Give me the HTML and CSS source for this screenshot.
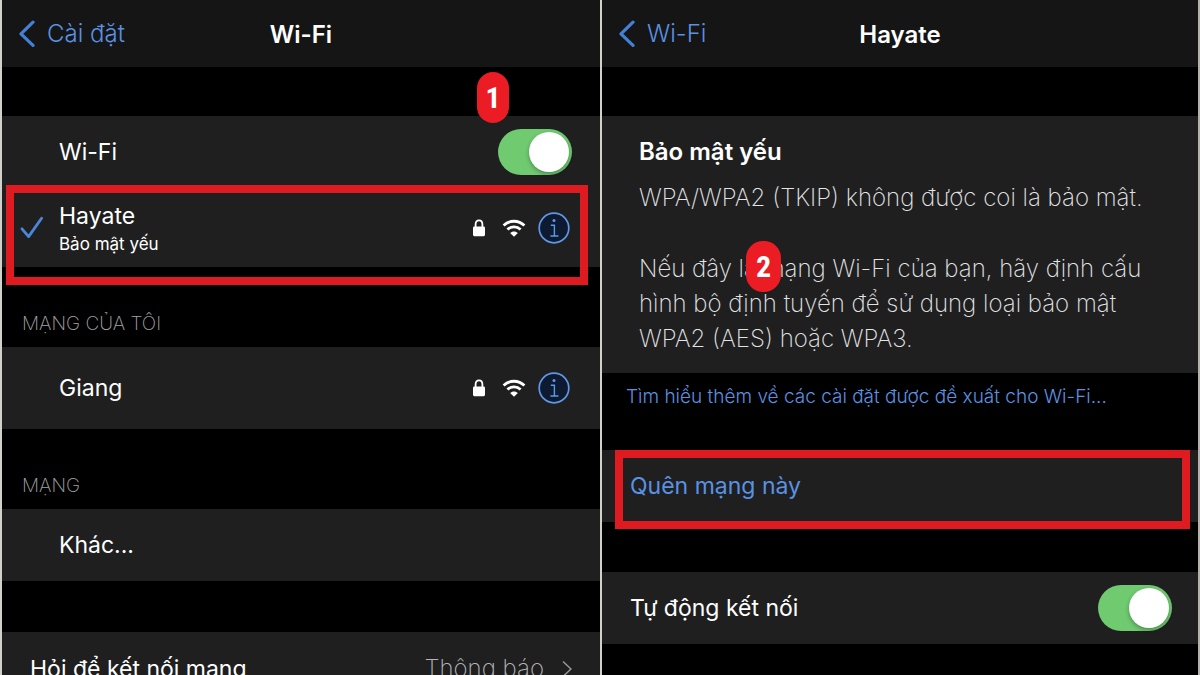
FILE: index.html
```
<!DOCTYPE html>
<html lang="vi">
<head>
    <meta charset="UTF-8">
    <meta name="viewport" content="width=device-width, initial-scale=1.0">
    <title>Wi-Fi</title>
    <link rel="stylesheet" href="styles.css">
</head>
<body>
    <!-- Shared icons -->
    <svg class="sprite" aria-hidden="true">
        <symbol id="back" viewBox="0 0 18 28">
            <path d="M15 2.2 3 13.8 15 25.4" fill="none" stroke="currentColor" stroke-width="3.2" stroke-linecap="round" stroke-linejoin="round"/>
        </symbol>
        <symbol id="lock" viewBox="0 0 14 18">
            <path d="M3.6 8V5.2C3.6 2.6 5 1.3 7 1.3s3.4 1.3 3.4 3.9V8" fill="none" stroke="currentColor" stroke-width="1.8"/>
            <rect x="1" y="7.4" width="12" height="9.8" rx="1.4" fill="currentColor"/>
        </symbol>
        <symbol id="wifi" viewBox="0 0 24 18">
            <path d="M1.6 6.6C7.4.8 16.6.8 22.4 6.6" fill="none" stroke="currentColor" stroke-width="2.8"/>
            <path d="M5.4 10.6c3.8-3.6 9.4-3.6 13.2 0" fill="none" stroke="currentColor" stroke-width="2.8"/>
            <path d="M12 17.8 8.1 14c2.2-2.1 5.6-2.1 7.8 0z" fill="currentColor"/>
        </symbol>
        <symbol id="info" viewBox="0 0 32 32">
            <circle cx="16" cy="16" r="14.8" fill="#0d1a30" stroke="currentColor" stroke-width="1.7"/>
            <circle cx="16" cy="8.6" r="1.5" fill="currentColor"/>
            <path d="M12.8 13.2h3.6v10.6M12.4 24h8" fill="none" stroke="currentColor" stroke-width="1.4"/>
        </symbol>
    </svg>

    <main class="screens">
        <section class="screen">
            <header class="navbar">
                <a href="#" class="back-link">
                    <svg class="icon-back"><use href="#back"/></svg>
                    <span>Cài đặt</span>
                </a>
                <h1 class="title">Wi-Fi</h1>
            </header>

            <div class="row row-first">
                <label for="wifi-toggle" class="name">Wi-Fi</label>
                <input type="checkbox" id="wifi-toggle" class="toggle" checked>
                <span class="badge badge-one">1</span>
            </div>
            <div class="row row-current">
                <svg class="icon-check" viewBox="0 0 24 24"><path d="M2 12.8 8.6 20.6 21.6 2.2" fill="none" stroke="currentColor" stroke-width="2.8" stroke-linecap="round" stroke-linejoin="round"/></svg>
                <div class="name">
                    <div>Hayate</div>
                    <div class="note">Bảo mật yếu</div>
                </div>
                <svg class="icon-lock"><use href="#lock"/></svg>
                <svg class="icon-wifi"><use href="#wifi"/></svg>
                <button type="button" class="info-btn" aria-label="Hayate"><svg class="icon-info"><use href="#info"/></svg></button>
                <span class="frame frame-current"></span>
            </div>

            <h2 class="group-title">MẠNG CỦA TÔI</h2>
            <div class="row row-network">
                <div class="name">Giang</div>
                <svg class="icon-lock"><use href="#lock"/></svg>
                <svg class="icon-wifi"><use href="#wifi"/></svg>
                <button type="button" class="info-btn" aria-label="Giang"><svg class="icon-info"><use href="#info"/></svg></button>
            </div>

            <h2 class="group-title">MẠNG</h2>
            <a href="#" class="row">
                <span class="name">Khác...</span>
            </a>

            <a href="#" class="row row-ask">
                <span class="name">Hỏi để kết nối mạng</span>
                <span class="value">Thông báo</span>
                <svg class="icon-next" viewBox="0 0 10 18"><path d="M1 1.5 9 9 1 16.5" fill="none" stroke="currentColor" stroke-width="1.5"/></svg>
            </a>
        </section>

        <section class="screen screen-detail">
            <header class="navbar">
                <a href="#" class="back-link">
                    <svg class="icon-back"><use href="#back"/></svg>
                    <span>Wi-Fi</span>
                </a>
                <h1 class="title">Hayate</h1>
            </header>

            <div class="warning">
                <h2 class="warning-title">Bảo mật yếu</h2>
                <p>WPA/WPA2 (TKIP) không được coi là bảo mật.</p>
                <p>Nếu đây là mạng Wi-Fi của bạn, hãy định cấu hình bộ định tuyến để sử dụng loại bảo mật WPA2 (AES) hoặc WPA3.</p>
                <span class="badge badge-two">2</span>
            </div>
            <a href="#" class="more-link">Tìm hiểu thêm về các cài đặt được đề xuất cho Wi-Fi...</a>

            <div class="row row-forget">
                <button type="button" class="forget-btn">Quên mạng này</button>
                <span class="frame frame-forget"></span>
            </div>

            <div class="row row-auto">
                <label for="auto-join" class="name">Tự động kết nối</label>
                <input type="checkbox" id="auto-join" class="toggle" checked>
            </div>
        </section>
    </main>
</body>
</html>
```
FILE: styles.css
```
* {
    margin: 0;
    padding: 0;
    box-sizing: border-box;
}

body {
    font-family: 'Inter', 'Liberation Sans', sans-serif;
    font-size: 24px;
    line-height: 32px;
    color: #fff;
    background: #000;
}

a {
    color: inherit;
    text-decoration: none;
}

button {
    font: inherit;
    color: inherit;
    background: none;
    border: none;
    cursor: pointer;
}

svg {
    flex: none;
    display: block;
}

.sprite {
    position: absolute;
    width: 0;
    height: 0;
}

.screens {
    display: grid;
    grid-template-columns: 1fr 1fr;
    height: 100vh;
    overflow: hidden;
}

.screen {
    background: #000;
    border-left: 2px solid #d2d0ca;
}

.screen-detail {
    border-right: 2px solid #b5b1ad;
}

/* Top bar */
.navbar {
    display: grid;
    grid-template-columns: 1fr auto 1fr;
    align-items: center;
    padding: 18px 16px 17px;
    background: #151516;
}

.back-link {
    display: flex;
    align-items: center;
    gap: 11px;
    color: #5a92e2;
    font-weight: 300;
}

.icon-back {
    width: 18px;
    height: 28px;
    color: #4480d6;
}

.title {
    font-size: 24px;
    line-height: 34px;
    font-weight: 600;
    margin-bottom: -2px;
}

/* Rows */
.row {
    position: relative;
    display: flex;
    align-items: center;
    padding: 20px 28px 20px 57px;
    font-size: 23px;
    background: #1f1f20;
}

.row-first {
    margin-top: 49px;
    padding-top: 13px;
    padding-bottom: 13px;
}

.row-current {
    padding: 12px 30px 11px 18px;
}

.row-network {
    padding: 25px 30px 25px 57px;
}

.row-ask {
    margin-top: 51px;
    padding-top: 21px;
    padding-left: 28px;
}

.name {
    flex: 1;
}

.note {
    font-size: 17px;
    line-height: 24px;
}

.value {
    color: #b4b4b6;
    font-size: 24px;
    font-weight: 200;
}

.group-title {
    padding: 43px 20px 9px;
    font-size: 19px;
    line-height: 28px;
    font-weight: 200;
    color: #a4a4a6;
}

/* Icons */
.icon-check {
    width: 24px;
    height: 24px;
    margin-right: 15px;
    color: #4a86da;
}

.icon-lock {
    width: 14px;
    height: 18px;
    margin-right: 16px;
}

.icon-wifi {
    width: 24px;
    height: 18px;
    margin-right: 12px;
}

.icon-info {
    width: 32px;
    height: 32px;
    color: #5f98ea;
}

.icon-next {
    width: 10px;
    height: 18px;
    margin-left: 18px;
    color: #98989a;
}

.toggle {
    appearance: none;
    width: 74px;
    height: 46px;
    padding: 3px;
    border-radius: 23px;
    background: #6fca70;
    cursor: pointer;
}

.toggle::before {
    content: '';
    display: block;
    width: 40px;
    height: 40px;
    border-radius: 50%;
    background: #fff;
    box-shadow: 0 2px 4px rgba(0, 0, 0, 0.3);
}

.toggle:checked::before {
    margin-left: 28px;
}

/* Network detail */
.warning {
    position: relative;
    margin-top: 49px;
    padding: 18px 37px 17px;
    line-height: 35px;
    font-weight: 200;
    color: #e4e4e6;
    background: #1f1f20;
}

.warning-title {
    margin-bottom: 11px;
    font-size: 24px;
    font-weight: 600;
    color: #fff;
}

.warning p + p {
    margin-top: 36px;
}

.more-link {
    display: block;
    padding: 10px 24px 39px;
    font-size: 19px;
    line-height: 28px;
    font-weight: 300;
    color: #5a92e2;
}

.row-forget {
    padding-left: 28px;
}

.row-auto {
    margin-top: 50px;
    padding: 13px 26px 13px 28px;
}

.forget-btn {
    color: #5a92e2;
}

/* Step markers */
.badge {
    position: absolute;
    width: 32px;
    border-radius: 17px;
    background: #ec1c24;
    font-family: 'Roboto Condensed', 'Liberation Sans Narrow', 'Open Sans Condensed', 'Noto Sans Condensed', 'DejaVu Sans Condensed', 'Roboto', sans-serif;
    font-size: 30px;
    line-height: 51px;
    font-weight: 700;
    text-align: center;
    color: #fff;
}

.badge-one {
    top: -44px;
    right: 91px;
}

.badge-two {
    top: 125px;
    left: 144px;
    width: 35px;
}

.frame {
    position: absolute;
    border: 8px solid #df1b22;
    pointer-events: none;
}

.frame-current {
    inset: -3px 12px -18px 4px;
}

.frame-forget {
    inset: 0 8px -7px 13px;
}
```
